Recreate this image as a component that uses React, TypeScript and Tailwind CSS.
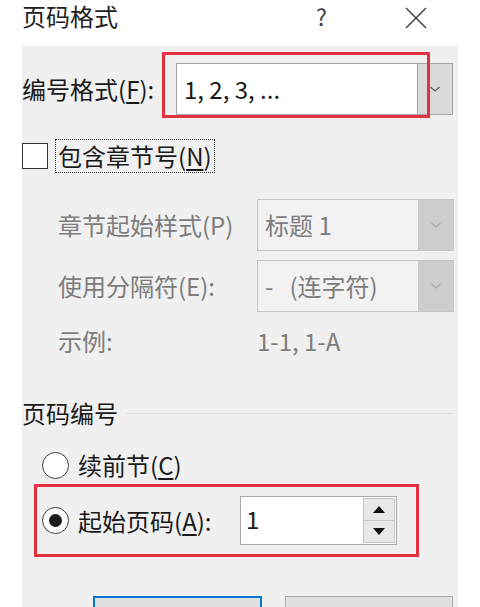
import React from "react";

const Chevron = ({ color }: { color: string }) => (
  <svg width="12" height="8" viewBox="0 0 12 8" fill="none">
    <path d="M1.5 2L6 6L10.5 2" stroke={color} strokeWidth="1.2" />
  </svg>
);

const Combo = ({
  text,
  disabled = false,
  className = "",
}: {
  text: string;
  disabled?: boolean;
  className?: string;
}) => (
  <div
    className={`flex h-[52px] border ${
      disabled ? "border-[#c6c6c6] bg-[#f2f2f2] text-[#7d7d7d]" : "border-[#a6a6a6] bg-white text-[#1a1a1a]"
    } ${className}`}
  >
    <div className="flex flex-1 items-center whitespace-pre pl-[7px]">{text}</div>
    <div
      className={`flex w-[35px] items-center justify-center border-l ${
        disabled ? "border-[#c6c6c6] bg-[#cdcdcd]" : "border-[#a6a6a6] bg-[#dadada]"
      }`}
    >
      <Chevron color={disabled ? "#a8a8a8" : "#5a5a5a"} />
    </div>
  </div>
);

const Radio = ({ checked = false }: { checked?: boolean }) => (
  <div className="flex h-[27px] w-[27px] items-center justify-center rounded-full border-[1.5px] border-[#3c3c3c] bg-white">
    {checked && <div className="h-[13px] w-[13px] rounded-full bg-[#1a1a1a]" />}
  </div>
);

export default function App() {
  return (
    <div
      className="relative h-[607px] w-[480px] overflow-hidden bg-white text-[24px] leading-[1.25] text-[#1a1a1a]"
      style={{ fontFamily: '"Noto Sans CJK SC", "Noto Sans", sans-serif' }}
    >
      {/* title bar */}
      <div className="flex h-[46px] items-start pl-[22px] pt-[1px]">
        <span className="text-[#222]">页码格式</span>
        <span className="ml-[198px] mt-[1px] text-[23px] text-[#444]">?</span>
        <svg className="ml-[78px] mt-[6px]" width="22" height="22" viewBox="0 0 22 22" fill="none">
          <path d="M1 1L21 21M21 1L1 21" stroke="#3a3a3a" strokeWidth="1.4" />
        </svg>
      </div>

      {/* panel */}
      <div className="relative ml-[22px] h-[561px] w-[436px] bg-[#f0f0f0]">
        <div className="box-content flex h-[52px] items-center pt-[17px]">
          <span className="w-[154px]">
            编号格式(<span className="underline underline-offset-[3px]">F</span>):
          </span>
          <Combo text="1, 2, 3, ..." className="w-[277px]" />
        </div>
        <div className="pointer-events-none absolute left-[140px] top-[6px] h-[66px] w-[268px] border-[3px] border-[#e2323f]" />

        <div className="mt-[24px] flex h-[34px] items-center">
          <div className="h-[26px] w-[26px] border-[1.5px] border-[#333] bg-white" />
          <div className="ml-[7px] flex h-[34px] items-center border border-dotted border-[#333] px-[2px]">
            包含章节号(<span className="underline underline-offset-[3px]">N</span>)
          </div>
        </div>

        <div className="mt-[26px] flex h-[52px] items-center pl-[36px] text-[#7d7d7d]">
          <span className="w-[199px]">章节起始样式(P)</span>
          <Combo text="标题 1" disabled className="w-[197px]" />
        </div>

        <div className="mt-[9px] flex h-[52px] items-center pl-[36px] text-[#7d7d7d]">
          <span className="w-[199px]">使用分隔符(E):</span>
          <Combo text="-   (连字符)" disabled className="w-[197px]" />
        </div>

        <div className="mt-[14px] flex h-[30px] items-center pl-[36px] text-[#7d7d7d]">
          <span className="w-[199px]">示例:</span>
          <span>1-1, 1-A</span>
        </div>

        <div className="mt-[43px] flex h-[28px] items-center">
          <span>页码编号</span>
          <div className="ml-[8px] mr-[4px] h-px flex-1 bg-[#dcdcdc]" />
        </div>

        <div className="mt-[24px] flex h-[28px] items-center pl-[20px]">
          <Radio />
          <span className="ml-[9px]">
            续前节(<span className="underline underline-offset-[3px]">C</span>)
          </span>
        </div>

        <div className="ml-[12px] mt-[5px] flex h-[73px] w-[385px] items-center border-[3px] border-[#e2323f] pl-[5px]">
          <Radio checked />
          <span className="ml-[9px] w-[162px]">
            起始页码(<span className="underline underline-offset-[3px]">A</span>):
          </span>
          <div className="flex h-[49px] w-[157px] border border-[#a9a9a9] bg-white">
            <div className="flex-1 pl-[5px] pt-[7px]">1</div>
            <div className="flex w-[33px] flex-col py-[1px] pr-[1px]">
              <div className="flex flex-1 items-center justify-center border border-[#c4c4c4] bg-[#e8e8e8]">
                <svg width="12" height="7" viewBox="0 0 12 7">
                  <path d="M6 0L12 7H0Z" fill="#111" />
                </svg>
              </div>
              <div className="flex flex-1 items-center justify-center border border-t-0 border-[#c4c4c4] bg-[#e8e8e8]">
                <svg width="12" height="7" viewBox="0 0 12 7">
                  <path d="M0 0H12L6 7Z" fill="#111" />
                </svg>
              </div>
            </div>
          </div>
        </div>

        <div className="mt-[39px] flex gap-[23px] pl-[71px]">
          <div className="h-[36px] w-[169px] border-2 border-[#0078d7] bg-[#e1e1e1]" />
          <div className="h-[36px] w-[168px] border border-[#adadad] bg-[#e1e1e1]" />
        </div>
      </div>
    </div>
  );
}
